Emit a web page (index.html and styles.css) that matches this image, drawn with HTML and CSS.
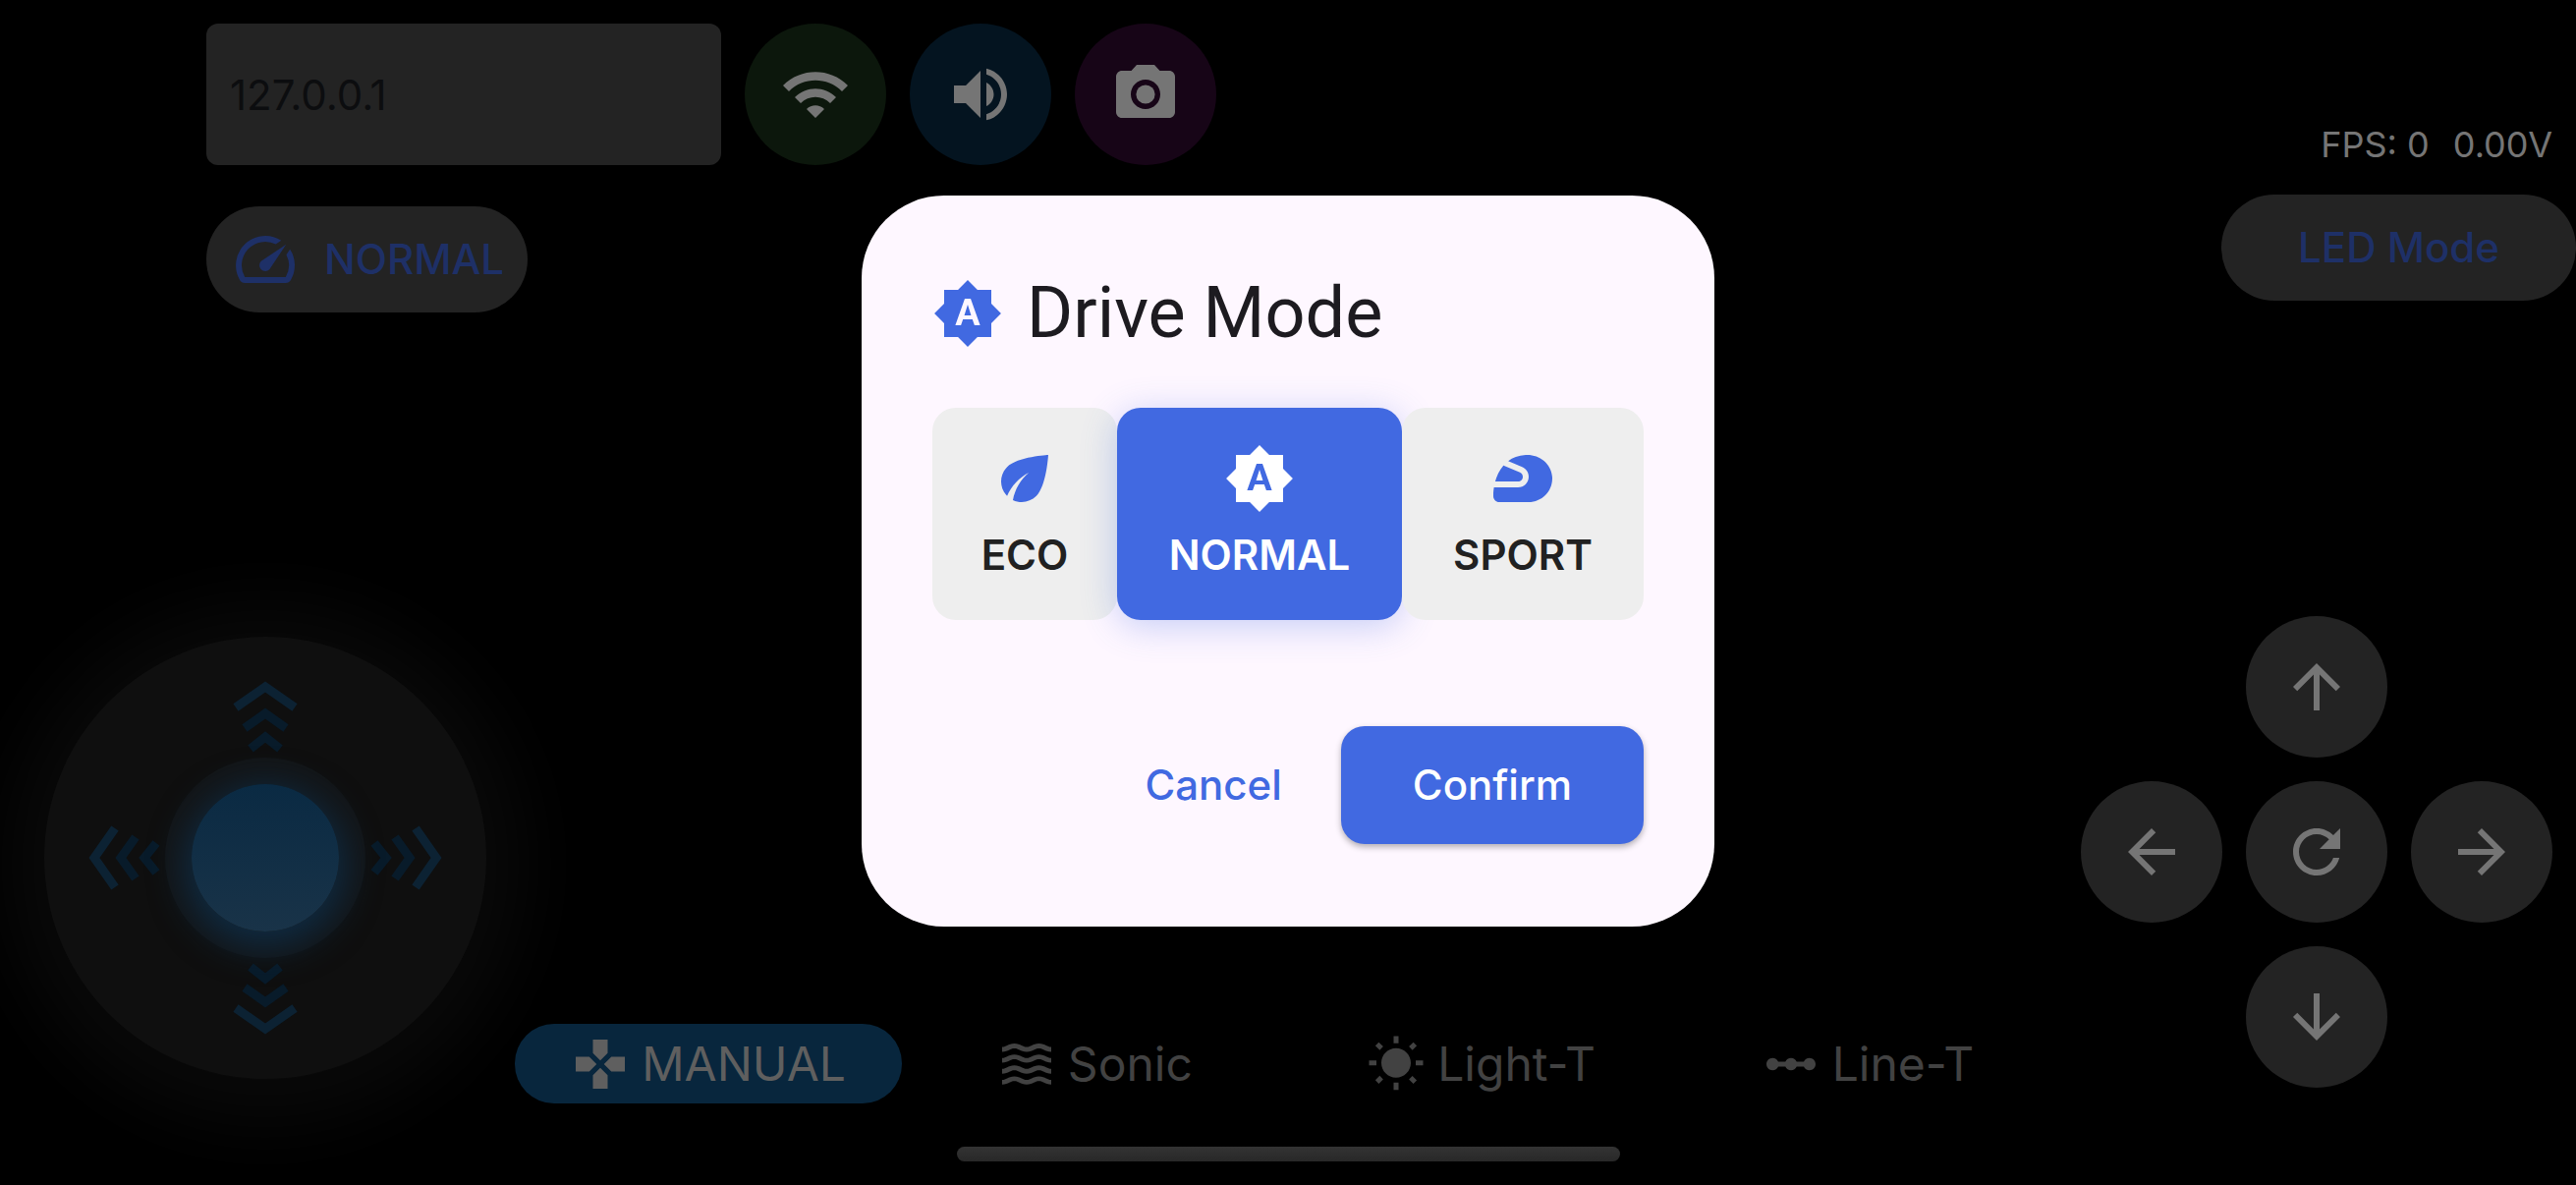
FILE: index.html
```html
<!DOCTYPE html>
<html lang="en">
<head>
<meta charset="utf-8">
<title>Rover Controller</title>
<link rel="stylesheet" href="styles.css">
</head>
<body>
<div class="app">
  <header class="topbar">
    <div class="topbar-left">
      <div class="connection">
        <input class="address" type="text" value="127.0.0.1" aria-label="Rover address">
        <button class="round round-wifi" aria-label="Connect">
          <svg class="icon" viewBox="0 0 24 24"><path d="M1 9l2 2c4.97-4.97 13.03-4.97 18 0l2-2C16.93 2.93 7.08 2.93 1 9zm8 8l3 3 3-3c-1.65-1.66-4.34-1.66-6 0zm-4-4l2 2c2.76-2.76 7.24-2.76 10 0l2-2C15.14 9.14 8.87 9.14 5 13z"/></svg>
        </button>
        <button class="round round-sound" aria-label="Sound">
          <svg class="icon" viewBox="0 0 24 24"><path d="M3 9v6h4l5 5V4L7 9H3zm13.5 3c0-1.77-1.02-3.29-2.5-4.03v8.05c1.48-.73 2.5-2.25 2.5-4.02zM14 3.23v2.06c2.89.86 5 3.54 5 6.71s-2.11 5.85-5 6.71v2.06c4.01-.91 7-4.49 7-8.77s-2.99-7.86-7-8.77z"/></svg>
        </button>
        <button class="round round-camera" aria-label="Camera">
          <svg class="icon" viewBox="0 0 24 24"><circle cx="12" cy="12" r="3.2"/><path d="M9 2L7.17 4H4c-1.1 0-2 .9-2 2v12c0 1.1.9 2 2 2h16c1.1 0 2-.9 2-2V6c0-1.1-.9-2-2-2h-3.17L15 2H9zm3 15c-2.76 0-5-2.24-5-5s2.24-5 5-5 5 2.24 5 5-2.24 5-5 5z"/></svg>
        </button>
      </div>
      <button class="pill pill-mode">
        <svg class="icon" viewBox="0 0 24 24"><path d="M20.38 8.57l-1.23 1.85a8 8 0 0 1-.22 7.58H5.07A8 8 0 0 1 15.58 6.85l1.85-1.23A10 10 0 0 0 3.35 19a2 2 0 0 0 1.72 1h13.85a2 2 0 0 0 1.74-1 10 10 0 0 0-.27-10.44zM10.59 15.41a2 2 0 0 0 2.83 0l5.66-8.49-8.49 5.66a2 2 0 0 0 0 2.83z"/></svg>
        <span>NORMAL</span>
      </button>
    </div>
    <div class="topbar-right">
      <div class="stats"><span>FPS: 0</span><span>0.00V</span></div>
      <button class="pill pill-led">LED Mode</button>
    </div>
  </header>

  <main class="controls">
    <div class="stick">
      <svg class="stick-arrows" viewBox="0 0 450 450">
        <defs>
          <g id="chevrons" fill="none" stroke-width="9">
            <path stroke="#0c2233" d="M195 72l30-21 30 21"/>
            <path stroke="#081b2a" d="M204 93l21-15 21 15M210 114l15-12 15 12"/>
          </g>
        </defs>
        <use href="#chevrons"/>
        <use href="#chevrons" transform="rotate(90 225 225)"/>
        <use href="#chevrons" transform="rotate(180 225 225)"/>
        <use href="#chevrons" transform="rotate(270 225 225)"/>
      </svg>
      <div class="stick-base"><div class="stick-knob"></div></div>
    </div>

    <nav class="tabs">
      <button class="tab tab-active">
        <svg class="tab-icon" viewBox="0 0 24 24"><path d="M15 7.5V2H9v5.5l3 3 3-3zM7.5 9H2v6h5.5l3-3-3-3zM9 16.5V22h6v-5.5l-3-3-3 3zM16.5 9l-3 3 3 3H22V9h-5.5z"/></svg>
        <span>MANUAL</span>
      </button>
      <button class="tab">
        <svg class="tab-icon" viewBox="0 0 24 24">
          <defs><path id="wave" d="M17 16.99c-1.35 0-2.2.42-2.95.8-.65.33-1.18.6-2.05.6-.9 0-1.4-.25-2.05-.6-.75-.38-1.57-.8-2.95-.8s-2.2.42-2.95.8c-.65.33-1.17.6-2.05.6v1.95c1.35 0 2.2-.42 2.95-.8.65-.33 1.17-.6 2.05-.6s1.4.25 2.05.6c.75.38 1.57.8 2.95.8s2.2-.42 2.95-.8c.65-.33 1.18-.6 2.05-.6.9 0 1.4.25 2.05.6.75.38 1.58.8 2.95.8v-1.95c-.9 0-1.4-.25-2.05-.6-.75-.38-1.6-.8-2.95-.8z"/></defs>
          <use href="#wave"/><use href="#wave" y="-4.45"/><use href="#wave" y="-8.9"/><use href="#wave" y="-13.35"/>
        </svg>
        <span>Sonic</span>
      </button>
      <button class="tab">
        <svg class="tab-icon" viewBox="0 0 24 24"><path d="M6.76 4.84l-1.8-1.79-1.41 1.41 1.79 1.79 1.42-1.41zM4 10.5H1v2h3v-2zm9-9.95h-2V3.5h2V.55zm7.45 3.91l-1.41-1.41-1.79 1.79 1.41 1.41 1.79-1.79zm-3.21 13.7l1.79 1.8 1.41-1.41-1.8-1.79-1.4 1.4zM20 10.5v2h3v-2h-3zm-8-5c-3.31 0-6 2.69-6 6s2.69 6 6 6 6-2.69 6-6-2.69-6-6-6zm-1 16.95h2V19.5h-2v2.95zm-7.45-3.91l1.41 1.41 1.79-1.8-1.41-1.41-1.79 1.8z"/></svg>
        <span>Light-T</span>
      </button>
      <button class="tab">
        <svg class="tab-icon" viewBox="0 0 24 24"><path d="M19.5 9.5c-1.03 0-1.9.62-2.29 1.5h-2.92c-.39-.88-1.26-1.5-2.29-1.5s-1.9.62-2.29 1.5H6.79c-.39-.88-1.26-1.5-2.29-1.5C3.12 9.5 2 10.62 2 12s1.12 2.5 2.5 2.5c1.03 0 1.9-.62 2.29-1.5h2.92c.39.88 1.26 1.5 2.29 1.5s1.9-.62 2.29-1.5h2.92c.39.88 1.26 1.5 2.29 1.5 1.38 0 2.5-1.12 2.5-2.5s-1.12-2.5-2.5-2.5z"/></svg>
        <span>Line-T</span>
      </button>
    </nav>

    <div class="dpad">
      <button class="round dpad-up" aria-label="Up">
        <svg class="icon" viewBox="0 0 24 24"><path d="M4 12l1.41 1.41L11 7.83V20h2V7.83l5.58 5.59L20 12l-8-8-8 8z"/></svg>
      </button>
      <button class="round dpad-left" aria-label="Left">
        <svg class="icon" viewBox="0 0 24 24"><path d="M20 11H7.83l5.59-5.59L12 4l-8 8 8 8 1.41-1.41L7.83 13H20v-2z"/></svg>
      </button>
      <button class="round dpad-center" aria-label="Reset">
        <svg class="icon" viewBox="0 0 24 24"><path d="M17.65 6.35C16.2 4.9 14.21 4 12 4c-4.42 0-7.99 3.58-7.99 8s3.57 8 7.99 8c3.73 0 6.84-2.55 7.73-6h-2.08c-.82 2.33-3.04 4-5.65 4-3.31 0-6-2.69-6-6s2.69-6 6-6c1.66 0 3.14.69 4.22 1.78L13 11h7V4l-2.35 2.35z"/></svg>
      </button>
      <button class="round dpad-right" aria-label="Right">
        <svg class="icon" viewBox="0 0 24 24"><path d="M12 4l-1.41 1.41L16.17 11H4v2h12.17l-5.58 5.59L12 20l8-8-8-8z"/></svg>
      </button>
      <button class="round dpad-down" aria-label="Down">
        <svg class="icon" viewBox="0 0 24 24"><path d="M20 12l-1.41-1.41L13 16.17V4h-2v12.17l-5.58-5.59L4 12l8 8 8-8z"/></svg>
      </button>
    </div>
  </main>

  <footer class="footer"><div class="home-bar"></div></footer>
</div>

<div class="overlay">
  <section class="dialog" role="dialog" aria-modal="true" aria-labelledby="dialog-title">
    <div class="dialog-head">
      <svg class="icon dialog-icon" viewBox="0 0 24 24"><path id="auto" d="M10.85 12.65h2.3L12 9l-1.15 3.65zM20 8.69V4h-4.69L12 .69 8.69 4H4v4.69L.69 12 4 15.31V20h4.69L12 23.31 15.31 20H20v-4.69L23.31 12 20 8.69zM14.3 16l-.7-2h-3.2l-.7 2H7.8L11 7h2l3.2 9h-1.9z"/></svg>
      <h1 class="dialog-title" id="dialog-title">Drive Mode</h1>
    </div>
    <div class="modes">
      <button class="mode" aria-pressed="false">
        <svg class="icon" viewBox="0 0 24 24"><path d="M6.05 8.05c-2.73 2.73-2.73 7.15-.02 9.88 1.47-3.4 4.09-6.24 7.36-7.93-2.77 2.34-4.71 5.61-5.39 9.32 2.6 1.23 5.8.78 7.95-1.37C19.43 14.47 20 4 20 4S9.53 4.57 6.05 8.05z"/></svg>
        <span class="mode-label">ECO</span>
      </button>
      <button class="mode mode-selected" aria-pressed="true">
        <svg class="icon" viewBox="0 0 24 24"><use href="#auto"/></svg>
        <span class="mode-label">NORMAL</span>
      </button>
      <button class="mode" aria-pressed="false">
        <svg class="icon" viewBox="0 0 24 24"><path d="M12 11.39c0-.65-.39-1.23-.98-1.48L5.44 7.55c-1.48 1.68-2.32 3.7-2.8 5.45h7.75C11.28 13 12 12.28 12 11.39zM21.96 11.22c-.41-4.41-4.56-7.49-8.98-7.2-2.51.16-4.44.94-5.93 2.04l4.74 2.01c1.33.57 2.2 1.87 2.2 3.32 0 1.99-1.62 3.61-3.61 3.61H2.21C2 16.31 2 17.2 2 17.2v.8c0 1.1.9 2 2 2h10c4.67 0 8.41-4.01 7.96-8.78z"/></svg>
        <span class="mode-label">SPORT</span>
      </button>
    </div>
    <div class="actions">
      <button class="btn btn-text">Cancel</button>
      <button class="btn btn-filled">Confirm</button>
    </div>
  </section>
</div>
</body>
</html>
```
FILE: styles.css
```css
* {
  box-sizing: border-box;
}

body {
  margin: 0;
  background: #000;
  font-family: Inter, "Liberation Sans", sans-serif;
  font-size: 42px;
  line-height: 60px;
}

button,
input {
  margin: 0;
  padding: 0;
  border: 0;
  background: none;
  font: inherit;
  color: inherit;
}

.icon {
  display: block;
  flex: none;
  width: 72px;
  height: 72px;
  fill: currentColor;
}

.app {
  display: flex;
  flex-direction: column;
  min-height: 100vh;
  overflow: hidden;
}

/* Top bar */
.topbar {
  display: flex;
  justify-content: space-between;
  padding: 24px 0 0 210px;
}

.topbar-left {
  display: flex;
  flex: 1;
  flex-direction: column;
  align-items: flex-start;
  gap: 42px;
}

.connection {
  display: flex;
  gap: 24px;
}

.address {
  width: 20vw;
  height: 144px;
  padding: 0 24px;
  border-radius: 12px;
  background: #232323;
  color: #0c0d0f;
}

.round {
  display: flex;
  align-items: center;
  justify-content: center;
  width: 144px;
  height: 144px;
  border-radius: 50%;
  background: #232323;
  color: #757575;
}

.round-wifi {
  background: #0c170c;
}

.round-sound {
  background: #041420;
}

.round-camera {
  background: #170517;
}

.pill {
  display: flex;
  align-items: center;
  justify-content: center;
  height: 108px;
  border-radius: 54px;
  background: #232323;
  color: #1e3067;
  font-weight: 500;
}

.pill-mode {
  gap: 24px;
  padding: 0 24px;
}

.pill-led {
  padding: 0 78px;
}

.topbar-right {
  display: flex;
  flex-direction: column;
  align-items: flex-end;
  gap: 24px;
  padding-top: 96px;
}

.stats {
  display: flex;
  gap: 24px;
  padding-right: 24px;
  color: #757575;
  font-size: 36px;
  line-height: 54px;
}

/* Driving controls */
.controls {
  display: grid;
  flex: 1;
  grid-template-columns: 1fr 60% 1fr;
  align-items: end;
}

.stick {
  display: grid;
  place-items: center;
  width: 450px;
  height: 450px;
  margin: 0 0 25px 45px;
  border-radius: 50%;
  background: #0f0f0f;
  box-shadow: 0 6px 72px 40px #090909;
}

.stick > * {
  grid-area: 1 / 1;
}

.stick-arrows {
  width: 450px;
  height: 450px;
}

.stick-base {
  display: grid;
  place-items: center;
  width: 204px;
  height: 204px;
  border-radius: 50%;
  background: #131517;
}

.stick-knob {
  width: 150px;
  height: 150px;
  border-radius: 50%;
  background: linear-gradient(#0a2a43, #193348);
  box-shadow: 0 9px 36px 6px #0f2c44;
}

.tabs {
  display: grid;
  grid-template-columns: repeat(4, 1fr);
  z-index: 1;
}

.tab {
  display: flex;
  align-items: center;
  justify-content: center;
  gap: 12px;
  height: 81px;
  border-radius: 40px;
  color: #424242;
  font-size: 48px;
}

.tab-active {
  background: #08263d;
  color: #5f5f5f;
}

.tab-icon {
  flex: none;
  width: 60px;
  height: 60px;
  fill: currentColor;
}

.dpad {
  display: grid;
  grid-template-areas:
    ". up ."
    "left center right"
    ". down .";
  gap: 24px;
  justify-self: end;
  margin: 0 24px 16px 0;
}

.dpad-up { grid-area: up; }
.dpad-left { grid-area: left; }
.dpad-center { grid-area: center; }
.dpad-right { grid-area: right; }
.dpad-down { grid-area: down; }

.footer {
  display: flex;
  justify-content: center;
  padding: 44px 0 24px;
}

.home-bar {
  width: 675px;
  height: 15px;
  border-radius: 8px;
  background: linear-gradient(#333, #282828);
}

/* Drive mode dialog */
.overlay {
  position: fixed;
  inset: 0 0 64px;
  z-index: 2;
  display: flex;
  align-items: center;
  justify-content: center;
}

.dialog {
  width: 868px;
  max-width: 100%;
  padding: 72px;
  border-radius: 84px;
  background: #fef7ff;
  color: #1d1b20;
}

.dialog-head {
  display: flex;
  align-items: center;
  gap: 24px;
  margin-bottom: 48px;
}

.dialog-icon {
  color: #4169e1;
}

.dialog-title {
  margin: 0;
  font-family: Roboto, "Liberation Sans", sans-serif;
  font-size: 72px;
  font-weight: 400;
  line-height: 96px;
}

.modes {
  display: grid;
  grid-template-columns: 188fr 290fr 246fr;
  margin-bottom: 96px;
}

.mode {
  display: flex;
  flex-direction: column;
  align-items: center;
  gap: 12px;
  padding: 36px 0;
  border-radius: 24px;
  background: #eee;
  color: #4169e1;
  font-weight: 600;
}

.mode-label {
  color: #212121;
}

.mode-selected {
  background: #4169e1;
  box-shadow: 0 6px 36px rgba(65, 105, 225, 0.3);
  color: #fff;
}

.mode-selected .mode-label {
  color: #fff;
}

.actions {
  display: flex;
  align-items: center;
  justify-content: flex-end;
  gap: 24px;
  min-height: 144px;
}

.btn {
  height: 120px;
  border-radius: 24px;
  font-weight: 500;
}

.btn-text {
  padding: 0 36px;
  color: #4169e1;
}

.btn-filled {
  padding: 0 73px;
  background: #4169e1;
  box-shadow: 0 3px 6px rgba(0, 0, 0, 0.3);
  color: #fff;
}
```
